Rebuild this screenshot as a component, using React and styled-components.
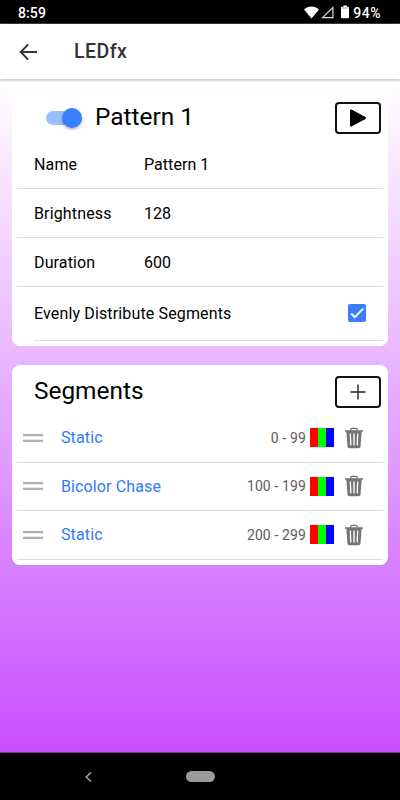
import React from 'react';
import styled, { createGlobalStyle } from 'styled-components';

const GlobalStyle = createGlobalStyle`
  * {
    box-sizing: border-box;
  }
  body {
    margin: 0;
    background: #000;
    font-family: Roboto, 'Noto Sans', sans-serif;
    color: #000;
  }
`;

const Screen = styled.div`
  display: flex;
  flex-direction: column;
  width: 400px;
  height: 800px;
  overflow: hidden;
`;

const StatusBar = styled.div`
  display: flex;
  align-items: center;
  height: 24px;
  flex: none;
  padding: 3px 19px 0 18px;
  border-bottom: 1px solid #3c3c3c;
  background: #000;
  color: #fff;
  font-size: 14px;
  font-weight: 500;
  letter-spacing: 0.1px;
`;

const StatusIcons = styled.div`
  display: flex;
  align-items: center;
  margin-left: auto;
  svg {
    display: block;
    margin-bottom: 2px;
  }
`;

const BatteryLevel = styled.span`
  display: flex;
  align-items: center;
  gap: 4px;
  margin-left: 7px;
  letter-spacing: 0.5px;
`;

const Header = styled.header`
  display: flex;
  align-items: center;
  height: 55px;
  flex: none;
  padding-left: 19px;
  background: #fff;
  box-shadow: 0 1px 3px rgba(0, 0, 0, 0.3);
  z-index: 1;
  svg {
    display: block;
  }
`;

const HeaderTitle = styled.h1`
  margin: 0 0 0 36px;
  font-size: 19.5px;
  line-height: 24px;
  font-weight: 500;
  letter-spacing: 0.45px;
  color: #333;
`;

const Content = styled.main`
  display: flex;
  flex-direction: column;
  flex: 1;
  gap: 19px;
  padding: 11px 12px 0;
  border-bottom: 1px solid #7c3a99;
  background: linear-gradient(#fff, #c94fff);
`;

const Card = styled.section`
  height: ${props => props.height}px;
  padding: 0 5px;
  border-radius: 8px;
  background: #fff;
`;

const CardHeader = styled.div`
  display: flex;
  align-items: center;
  height: ${props => props.height}px;
  padding: ${props => props.top}px 2px 0 ${props => props.inset}px;
`;

const CardTitle = styled.h2`
  margin: 0 auto 0 0;
  padding-bottom: ${props => props.lift}px;
  font-size: 24.4px;
  line-height: 30px;
  font-weight: 400;
`;

const Toggle = styled.div`
  display: flex;
  align-items: center;
  justify-content: flex-end;
  width: 36px;
  height: 14px;
  margin-right: 13px;
  border-radius: 7px;
  background: #9bbfff;
`;

const ToggleKnob = styled.span`
  width: 20px;
  height: 20px;
  flex: none;
  border-radius: 50%;
  background: #3880ff;
  box-shadow: 0 2px 2px rgba(0, 0, 0, 0.16), 0 1px 4px rgba(0, 0, 0, 0.12);
`;

const OutlineButton = styled.button`
  display: flex;
  align-items: center;
  justify-content: center;
  width: 46px;
  height: 32px;
  padding: 0;
  border: 2px solid #111;
  border-radius: 4px;
  background: #fff;
`;

const Row = styled.div`
  display: flex;
  align-items: center;
  height: 48.75px;
  padding: 1px 0 0 17px;
  border-bottom: 1px solid #dedede;
  font-size: 16px;
`;

const Label = styled.span`
  width: 110px;
  letter-spacing: 0.14px;
`;

const Value = styled.span`
  letter-spacing: 0.05px;
`;

const CheckRow = styled.div`
  display: flex;
  align-items: center;
  justify-content: space-between;
  height: 54px;
  margin-left: 17px;
  padding-right: 17px;
  border-bottom: 1px solid #dedede;
  font-size: 16px;
  letter-spacing: 0.14px;
`;

const Checkbox = styled.span`
  display: flex;
  width: 18px;
  height: 18px;
  border-radius: 2px;
  background: #3880ff;
`;

const SegmentRow = styled(Row)`
  height: 48.6px;
  padding: 0 20px 0 6px;
`;

const DragHandle = styled.svg`
  display: block;
  margin-right: 18px;
`;

const SegmentName = styled.span`
  margin-right: auto;
  color: #2f7bff;
  letter-spacing: 0.12px;
`;

const SegmentRange = styled.span`
  margin-right: 4px;
  color: #5c5c5c;
  font-size: 14px;
  letter-spacing: 0.12px;
`;

const Swatch = styled.span`
  display: flex;
  width: 24px;
  height: 19px;
  margin-right: 11px;
`;

const SwatchColor = styled.span`
  flex: 1;
  background: ${props => props.color};
`;

const NavBar = styled.nav`
  display: flex;
  align-items: center;
  height: 47px;
  flex: none;
  padding-left: 84px;
  background: #000;
`;

const HomePill = styled.span`
  width: 29px;
  height: 11px;
  margin-left: 93px;
  border-radius: 6px;
  background: #9b9b9b;
`;

const WifiIcon = () => (
  <svg width="17" height="13" viewBox="0 0 17 13">
    <path d="M7.5 12.6 0 3.4C4-.5 11-.5 15 3.4Z" fill="#fff" />
  </svg>
);

const SignalIcon = () => (
  <svg width="13" height="13" viewBox="0 0 13 13">
    <path d="M1.6 11.7 11.9 1.4v10.3Z" fill="none" stroke="#ddd" strokeWidth="1.2" />
  </svg>
);

const BatteryIcon = () => (
  <svg width="8" height="14" viewBox="0 0 8 14">
    <path d="M2.4.4h3.4v1.3H7q1 0 1 1v9.6q0 1-1 1H1q-1 0-1-1V2.7q0-1 1-1h1.4Z" fill="#fff" />
    <path d="M1.2 3h5.6" stroke="#777" strokeWidth=".7" />
  </svg>
);

const BackIcon = () => (
  <svg width="19" height="18" viewBox="0 0 19 18">
    <path d="M9.2 1.3 1.7 9l7.5 7.7M1.8 9H18" fill="none" stroke="#333" strokeWidth="1.9" />
  </svg>
);

const PlayIcon = () => (
  <svg width="18" height="20" viewBox="0 0 18 20">
    <path d="M2 2.5 16 10 2 17.5Z" fill="#000" stroke="#000" strokeWidth="2" strokeLinejoin="round" />
  </svg>
);

const PlusIcon = () => (
  <svg width="16" height="16" viewBox="0 0 16 16">
    <path d="M8 .5v15M.5 8h15" stroke="#222" strokeWidth="1.4" />
  </svg>
);

const CheckIcon = () => (
  <svg width="18" height="18" viewBox="0 0 18 18">
    <path d="m3.2 9.5 3.5 3.6 8.6-8.5" fill="none" stroke="#fff" strokeWidth="1.8" />
  </svg>
);

const ReorderIcon = () => (
  <DragHandle width="20" height="10" viewBox="0 0 20 10">
    <path d="M0 2.1h20M0 7.9h20" stroke="#b0b0b0" strokeWidth="2.4" />
  </DragHandle>
);

const TrashIcon = () => (
  <svg width="18" height="22" viewBox="0 0 18 22">
    <path d="M5.7 3.8V2.3q0-1 1-1h4.6q1 0 1 1v1.5" fill="none" stroke="#737373" strokeWidth="1.3" />
    <path d="M0 3.3h18v1.5h-1.4l-1.1 14.7q-.1 1.7-1.9 1.7H4.4q-1.8 0-1.9-1.7L1.4 4.8H0Z" fill="#737373" />
    <path d="m5.3 6.6.5 11.8M9 6.6v11.8m3.7-11.8-.5 11.8" stroke="#fff" strokeWidth="1.35" />
  </svg>
);

const NavBackIcon = () => (
  <svg width="9" height="12" viewBox="0 0 9 12">
    <path d="M7 1.5 2.2 6 7 10.5" fill="none" stroke="#aaa" strokeWidth="1.4" />
  </svg>
);

const settings = [
  { label: 'Name', value: 'Pattern 1' },
  { label: 'Brightness', value: '128' },
  { label: 'Duration', value: '600' },
];

const segments = [
  { name: 'Static', range: '0 - 99' },
  { name: 'Bicolor Chase', range: '100 - 199' },
  { name: 'Static', range: '200 - 299' },
];

const colors = ['#f00', '#0f0', '#00f'];

function PatternCard() {
  return (
    <Card height={256}>
      <CardHeader height={50.4} top={6} inset={29}>
        <Toggle>
          <ToggleKnob />
        </Toggle>
        <CardTitle lift={3}>Pattern 1</CardTitle>
        <OutlineButton aria-label="Play">
          <PlayIcon />
        </OutlineButton>
      </CardHeader>
      {settings.map(item => (
        <Row key={item.label}>
          <Label>{item.label}</Label>
          <Value>{item.value}</Value>
        </Row>
      ))}
      <CheckRow>
        Evenly Distribute Segments
        <Checkbox>
          <CheckIcon />
        </Checkbox>
      </CheckRow>
    </Card>
  );
}

function SegmentsCard() {
  return (
    <Card height={200}>
      <CardHeader height={49} top={4} inset={17}>
        <CardTitle lift={1}>Segments</CardTitle>
        <OutlineButton aria-label="Add segment">
          <PlusIcon />
        </OutlineButton>
      </CardHeader>
      {segments.map((segment, index) => (
        <SegmentRow key={index}>
          <ReorderIcon />
          <SegmentName>{segment.name}</SegmentName>
          <SegmentRange>{segment.range}</SegmentRange>
          <Swatch>
            {colors.map(color => (
              <SwatchColor key={color} color={color} />
            ))}
          </Swatch>
          <TrashIcon />
        </SegmentRow>
      ))}
    </Card>
  );
}

function App() {
  return (
    <>
      <GlobalStyle />
      <Screen>
        <StatusBar>
          8:59
          <StatusIcons>
            <WifiIcon />
            <SignalIcon />
            <BatteryLevel>
              <BatteryIcon />
              94%
            </BatteryLevel>
          </StatusIcons>
        </StatusBar>
        <Header>
          <BackIcon />
          <HeaderTitle>LEDfx</HeaderTitle>
        </Header>
        <Content>
          <PatternCard />
          <SegmentsCard />
        </Content>
        <NavBar>
          <NavBackIcon />
          <HomePill />
        </NavBar>
      </Screen>
    </>
  );
}

export default App;
